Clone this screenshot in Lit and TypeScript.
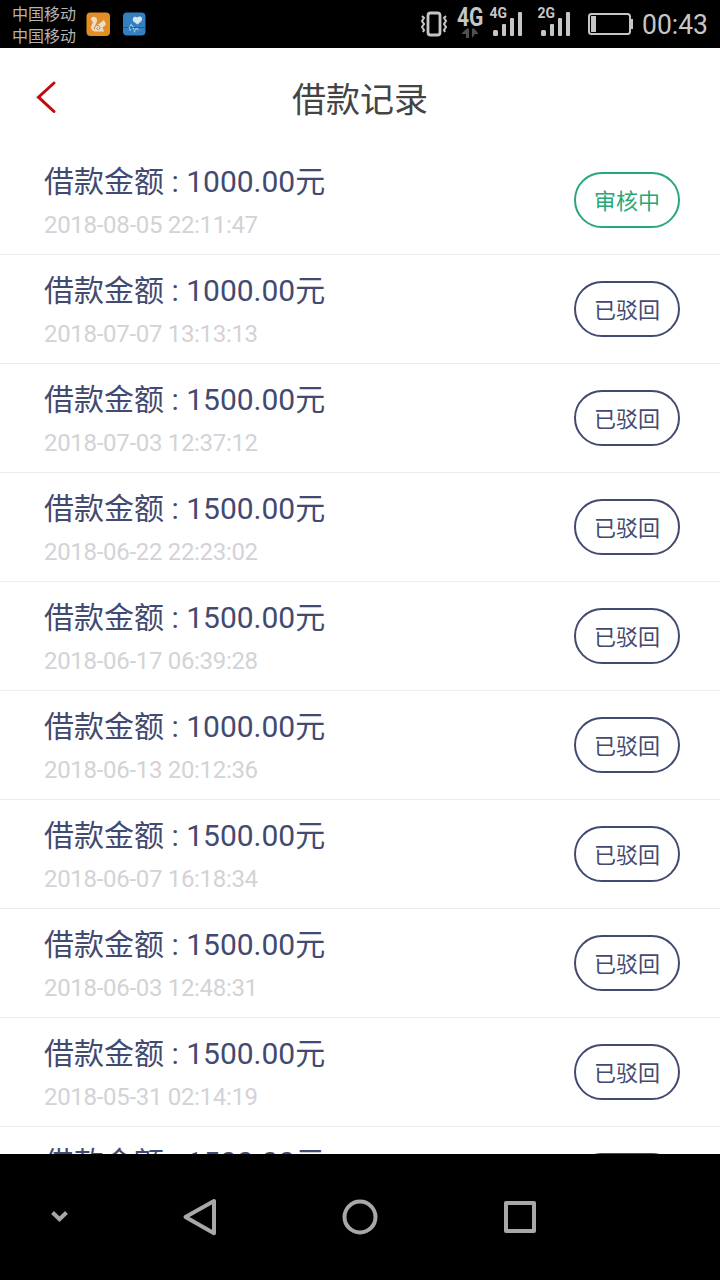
import { LitElement, html, css, svg } from "lit";
import { customElement, property } from "lit/decorators.js";

interface LoanRecord {
  amount: string;
  time: string;
  pending?: boolean;
}

const records: LoanRecord[] = [
  { amount: "1000.00", time: "2018-08-05 22:11:47", pending: true },
  { amount: "1000.00", time: "2018-07-07 13:13:13" },
  { amount: "1500.00", time: "2018-07-03 12:37:12" },
  { amount: "1500.00", time: "2018-06-22 22:23:02" },
  { amount: "1500.00", time: "2018-06-17 06:39:28" },
  { amount: "1000.00", time: "2018-06-13 20:12:36" },
  { amount: "1500.00", time: "2018-06-07 16:18:34" },
  { amount: "1500.00", time: "2018-06-03 12:48:31" },
  { amount: "1500.00", time: "2018-05-31 02:14:19" },
  { amount: "1500.00", time: "" },
];

@customElement("status-bar")
class StatusBar extends LitElement {
  static styles = css`
    :host {
      display: flex;
      align-items: flex-start;
      height: 48px;
      background: #000;
      color: #b4b4b4;
      font-family: Roboto, "Noto Sans CJK SC", sans-serif;
      box-sizing: border-box;
      padding-left: 12px;
      overflow: hidden;
    }
    svg {
      display: block;
    }
    .carriers {
      width: 74px;
      padding-top: 4px;
      font-size: 16px;
      line-height: 22px;
      white-space: nowrap;
    }
    .apps {
      display: flex;
      gap: 12px;
      padding-top: 12px;
      flex: 1;
    }
    .network {
      width: 302px;
      flex: none;
    }
    .network text {
      font-family: Roboto, sans-serif;
      font-weight: 700;
      fill: #c6c6c6;
    }
    .network .clock {
      font-weight: 400;
    }
  `;

  private bars(x: number) {
    return svg`
      <rect x=${x} y="30" width="5" height="6" rx="1.5"/>
      <rect x=${x + 9} y="24" width="4" height="12" rx="1"/>
      <rect x=${x + 17} y="18" width="4" height="18" rx="1"/>
      <rect x=${x + 25} y="12" width="4" height="24" rx="1"/>`;
  }

  render() {
    return html`
      <div class="carriers">
        <div>中国移动</div>
        <div>中国移动</div>
      </div>
      <div class="apps">
        <svg width="24" height="24" viewBox="0 0 24 24">
          <rect x="0.500" y="0.500" width="23.500" height="23.500" rx="4" fill="#e38d25" />
          <path d="M9.500 14.500C8.500 12.500 11.500 10.500 11 7.500C10.500 4.500 6 3.800 5 6.500C4.300 8.500 7 8.500 6.800 10.500C6.500 12.500 4 14 5.500 17C6.500 19 8 19.500 10 19.500H18C18 17.800 16.500 17.200 16.500 15.500C18 14 20.500 13.500 19.500 11L18.500 9.500L18 7.500L16.500 9.500C14.500 9.500 14.500 12 12 12.500C11 12.800 10 13.500 9.500 14.500Z" fill="#e8dfcf" />
          <path d="M8.500 17.500C7.500 13.500 12.500 12 14 15.200C14.500 17.500 11.500 18.500 10.800 16.700C10.700 15.800 11.500 15.500 12 16" fill="none" stroke="#dc7d1d" stroke-width="1" />
        </svg>
        <svg width="24" height="24" viewBox="0 0 24 24">
          <rect x="1" y="0.500" width="22.500" height="23" rx="4" fill="#347fc2" />
          <path d="M1 15.500H23.500" stroke="#245c91" stroke-width="1" />
          <path d="M15.500 12.500L11.500 9.500C9.500 6.500 12 3 15.300 5.500C18 3 21.500 5.500 19.500 9Z" fill="#d9e3ea" />
          <path d="M7 16.500L9 12.500L11 15L12.500 19.500L14.500 16L17 18.500M7.500 18.500L9 17" fill="none" stroke="#b7cee2" stroke-width="1.200" stroke-dasharray="2 0.800" />
        </svg>
      </div>
      <svg class="network" width="302" height="48" viewBox="418 0 302 48" fill="#c6c6c6">
        <rect x="428" y="13" width="12" height="22" rx="2.500" fill="none" stroke="#c6c6c6" stroke-width="2.800" />
        <path d="M422 16l2 2l-2 3l2 3l-2 3l2 3l-1 2M446 16l-2 2l2 3l-2 3l2 3l-2 3l1 2" fill="none" stroke="#c6c6c6" stroke-width="2" />
        <text x="457" y="26" font-size="25" textLength="26.500" lengthAdjust="spacingAndGlyphs">4G</text>
        <path d="M462 33L467 28.500H469V38H466V34H462ZM472 28.500H474L478 33V34H475L472 38Z" fill="#505050" />
        <text x="489.500" y="18" font-size="14" textLength="17.500" lengthAdjust="spacingAndGlyphs">4G</text>
        ${this.bars(493)}
        <text x="537.500" y="18" font-size="14" textLength="17.500" lengthAdjust="spacingAndGlyphs">2G</text>
        ${this.bars(541)}
        <rect x="589" y="14" width="41" height="20" rx="2.500" fill="none" stroke="#c6c6c6" stroke-width="2" />
        <rect x="591" y="16" width="5" height="16" />
        <path d="M631 19h2v10h-2z" />
        <text class="clock" x="642" y="34" font-size="27" textLength="66" lengthAdjust="spacingAndGlyphs">00:43</text>
      </svg>
    `;
  }
}

@customElement("loan-row")
class LoanRow extends LitElement {
  @property({ attribute: false }) record!: LoanRecord;

  static styles = css`
    :host {
      display: flex;
      justify-content: space-between;
      align-items: flex-start;
      box-sizing: border-box;
      height: 109px;
      flex: none;
      padding: 0 40px 0 44px;
      border-bottom: 1px solid #ededee;
      font-family: Roboto, "Noto Sans CJK SC", sans-serif;
    }
    .amount {
      margin-top: 16px;
      font-size: 30px;
      line-height: 40px;
      color: #434a70;
      white-space: pre;
    }
    .time {
      margin-top: 7px;
      font-size: 24px;
      line-height: 32px;
      letter-spacing: -0.310px;
      color: #d2d3d7;
      white-space: nowrap;
    }
    .status {
      box-sizing: border-box;
      width: 106px;
      height: 56px;
      margin-top: 26px;
      border: 2px solid #434a70;
      border-radius: 28px;
      color: #434a70;
      font-size: 22px;
      line-height: 56px;
      text-align: center;
    }
    .pending {
      color: #27a877;
      border-color: #27a877;
    }
  `;

  render() {
    const r = this.record;
    return html`
      <div>
        <div class="amount">借款金额 : ${r.amount}元</div>
        <div class="time">${r.time}</div>
      </div>
      <div class="status ${r.pending ? "pending" : ""}">${r.time ? (r.pending ? "审核中" : "已驳回") : ""}</div>
    `;
  }
}

@customElement("app-root")
class AppRoot extends LitElement {
  static styles = css`
    :host {
      display: flex;
      flex-direction: column;
      height: 1280px;
      background: #fff;
      overflow: hidden;
      font-family: Roboto, "Noto Sans CJK SC", sans-serif;
    }
    status-bar {
      flex: none;
    }
    svg {
      display: block;
    }
    .header {
      display: grid;
      grid-template-columns: 100px 1fr 100px;
      align-items: center;
      height: 98px;
      flex: none;
    }
    .back {
      margin-left: 34px;
    }
    .title {
      margin: 0;
      padding-top: 5px;
      font-size: 34px;
      font-weight: 400;
      line-height: 50px;
      text-align: center;
      color: #444;
    }
    .list {
      display: flex;
      flex-direction: column;
      flex: 1;
      min-height: 0;
      overflow: hidden;
    }
    .nav {
      display: grid;
      grid-template-columns: 120px 160px 160px 160px 120px;
      justify-items: center;
      align-items: center;
      flex: none;
      height: 126px;
      background: #000;
    }
    .nav svg {
      fill: none;
      stroke: #a8a8a8;
      stroke-width: 4;
      stroke-linejoin: round;
      stroke-linecap: round;
    }
  `;

  render() {
    return html`
      <status-bar></status-bar>
      <div class="header">
        <svg class="back" width="24" height="36" viewBox="0 0 24 36">
          <path d="M20 4L4.500 18.200L20 32.500" fill="none" stroke="#c40b0b" stroke-width="3" stroke-linecap="round" />
        </svg>
        <h1 class="title">借款记录</h1>
      </div>
      <div class="list">${records.map((r) => html`<loan-row .record=${r}></loan-row>`)}</div>
      <div class="nav">
        <svg width="40" height="40" viewBox="0 0 40 40"><path d="M12.500 15.500L19.500 22.300L26.500 15.500" stroke-linecap="butt" stroke-linejoin="miter" /></svg>
        <svg width="40" height="40" viewBox="0 0 40 40"><path d="M34 4V36.300L5.500 20Z" /></svg>
        <svg width="40" height="40" viewBox="0 0 40 40"><circle cx="20" cy="20" r="15.500" /></svg>
        <svg width="40" height="40" viewBox="0 0 40 40"><rect x="6" y="6" width="28" height="28" /></svg>
      </div>
    `;
  }
}
